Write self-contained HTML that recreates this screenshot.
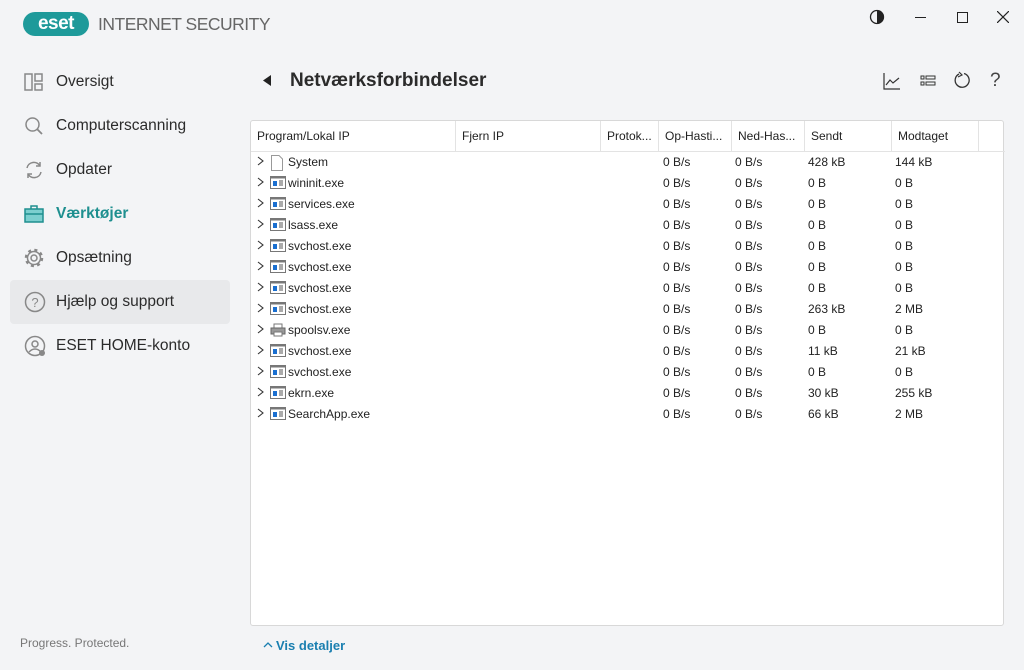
<!DOCTYPE html>
<html><head><meta charset="utf-8"><style>
*{margin:0;padding:0;box-sizing:border-box}
body{width:1024px;height:670px;background:#f3f4f6;font-family:"Liberation Sans",sans-serif;color:#222;position:relative;overflow:hidden;font-size:13px}
.abs{position:absolute}
.nav{position:absolute;left:10px;width:220px;height:44px;display:flex;align-items:center;font-size:15.5px;color:#2b2b2b}
.nav svg{position:absolute;left:14px}
.nav span{position:absolute;left:46px}
.panel{position:absolute;left:250px;top:120px;width:754px;height:506px;background:#fff;border:1px solid #d8d8d8;border-radius:3px}
.hdr{position:absolute;top:0;height:31px;border-right:1px solid #e3e3e3;border-bottom:1px solid #e3e3e3;font-size:12px;line-height:31px;padding-left:6px;white-space:nowrap;overflow:hidden}
.row{position:absolute;left:0;height:21px;font-size:12px;line-height:21px;width:750px}
.row div{position:absolute;white-space:nowrap}
</style></head><body>
<div class="abs" style="left:23px;top:12px;width:66px;height:24px;background:#1e9a9a;border-radius:12px;color:#fff;font-weight:bold;font-size:19px;line-height:24px;text-align:center;letter-spacing:-0.5px">eset</div>
<div class="abs" style="left:98px;top:14px;font-size:17.5px;color:#666;letter-spacing:-0.5px">INTERNET SECURITY</div>

<svg class="abs" style="left:869px;top:9px" width="16" height="16"><circle cx="8" cy="8" r="6.5" fill="none" stroke="#222" stroke-width="1.3"/><path d="M8 1.5A6.5 6.5 0 0 1 8 14.5Z" fill="#222"/></svg>
<div class="abs" style="left:915px;top:17px;width:11px;height:1px;background:#222"></div>
<div class="abs" style="left:957px;top:12px;width:11px;height:11px;border:1px solid #222"></div>
<svg class="abs" style="left:997px;top:11px" width="12" height="12"><path d="M0 0L12 12M12 0L0 12" stroke="#222" stroke-width="1.2"/></svg>

<div class="nav" style="top:60px"><svg width="20" height="20"><rect x="1" y="2" width="7" height="16" fill="none" stroke="#888" stroke-width="1.5"/><rect x="11" y="2" width="7" height="7" fill="none" stroke="#888" stroke-width="1.5"/><rect x="11" y="12" width="7" height="6" fill="none" stroke="#888" stroke-width="1.5"/></svg><span>Oversigt</span></div>
<div class="nav" style="top:104px"><svg width="20" height="20"><circle cx="8.5" cy="8.5" r="6.5" fill="none" stroke="#888" stroke-width="1.5"/><path d="M13 13L18 18" stroke="#888" stroke-width="1.8"/></svg><span>Computerscanning</span></div>
<div class="nav" style="top:148px"><svg width="20" height="20"><path d="M3 8A7 7 0 0 1 16 6M17 12A7 7 0 0 1 4 14" fill="none" stroke="#888" stroke-width="1.5"/><path d="M16 2V6H12M4 18V14H8" fill="none" stroke="#888" stroke-width="1.5"/></svg><span>Opdater</span></div>
<div class="nav" style="top:192px;color:#1e8f8f;font-weight:bold"><svg width="20" height="20"><rect x="1" y="5" width="18" height="13" fill="#7ccfcf" stroke="#1e8f8f" stroke-width="1.5"/><path d="M7 5V2H13V5M1 10H19" fill="none" stroke="#1e8f8f" stroke-width="1.5"/></svg><span>Værktøjer</span></div>
<div class="nav" style="top:236px"><svg width="20" height="20"><circle cx="10" cy="10" r="3" fill="none" stroke="#888" stroke-width="1.5"/><circle cx="10" cy="10" r="6.5" fill="none" stroke="#888" stroke-width="1.5"/><circle cx="10" cy="10" r="8" fill="none" stroke="#888" stroke-width="2.5" stroke-dasharray="3 3.3"/></svg><span>Opsætning</span></div>
<div class="nav" style="top:280px;background:#e8e9eb;border-radius:4px"><svg width="22" height="22"><circle cx="11" cy="11" r="9.5" fill="none" stroke="#888" stroke-width="1.5"/><text x="11" y="16" font-size="13" text-anchor="middle" fill="#888" font-family="Liberation Sans">?</text></svg><span>Hjælp og support</span></div>
<div class="nav" style="top:324px"><svg width="22" height="22"><circle cx="11" cy="11" r="9.5" fill="none" stroke="#888" stroke-width="1.5"/><circle cx="11" cy="9" r="3" fill="none" stroke="#888" stroke-width="1.5"/><path d="M5 17Q11 11 17 17" fill="none" stroke="#888" stroke-width="1.5"/><circle cx="18" cy="18" r="3" fill="#888"/></svg><span>ESET HOME-konto</span></div>

<div class="abs" style="left:20px;top:636px;font-size:12px;color:#777">Progress. Protected.</div>

<svg class="abs" style="left:263px;top:75px" width="8" height="11"><path d="M8 0V11L0 5.5Z" fill="#222"/></svg>
<div class="abs" style="left:290px;top:70px;font-size:19px;font-weight:bold;color:#2b2b2b">Netværksforbindelser</div>

<svg class="abs" style="left:883px;top:72px" width="18" height="18"><path d="M1 1V17H17" fill="none" stroke="#333" stroke-width="1.2"/><path d="M3 13L7 8L10 11L16 6" fill="none" stroke="#333" stroke-width="1.2"/></svg>
<svg class="abs" style="left:920px;top:74px" width="16" height="14"><rect x="1" y="2" width="3" height="3" fill="none" stroke="#333"/><rect x="6" y="2" width="9" height="3" fill="none" stroke="#333"/><rect x="1" y="8" width="3" height="3" fill="none" stroke="#333"/><rect x="6" y="8" width="9" height="3" fill="none" stroke="#333"/></svg>
<svg class="abs" style="left:953px;top:71px" width="18" height="18"><path d="M6 3A7 7 0 1 0 11 2.5" fill="none" stroke="#333" stroke-width="1.3"/><path d="M6 1L9 4L5 6" fill="none" stroke="#333" stroke-width="1.2"/></svg>
<div class="abs" style="left:990px;top:70px;font-size:19px;color:#444">?</div>

<div class="panel">
<div class="hdr" style="left:0;width:205px">Program/Lokal IP</div>
<div class="hdr" style="left:205px;width:145px">Fjern IP</div>
<div class="hdr" style="left:350px;width:58px">Protok...</div>
<div class="hdr" style="left:408px;width:73px">Op-Hasti...</div>
<div class="hdr" style="left:481px;width:73px">Ned-Has...</div>
<div class="hdr" style="left:554px;width:87px">Sendt</div>
<div class="hdr" style="left:641px;width:87px">Modtaget</div>
<div class="hdr" style="left:728px;width:26px;border-right:none"></div>
<div id="rows"></div>
</div>
<script>
var d=[["System","0 B/s","0 B/s","428 kB","144 kB",0],["wininit.exe","0 B/s","0 B/s","0 B","0 B",1],["services.exe","0 B/s","0 B/s","0 B","0 B",1],["lsass.exe","0 B/s","0 B/s","0 B","0 B",1],["svchost.exe","0 B/s","0 B/s","0 B","0 B",1],["svchost.exe","0 B/s","0 B/s","0 B","0 B",1],["svchost.exe","0 B/s","0 B/s","0 B","0 B",1],["svchost.exe","0 B/s","0 B/s","263 kB","2 MB",1],["spoolsv.exe","0 B/s","0 B/s","0 B","0 B",2],["svchost.exe","0 B/s","0 B/s","11 kB","21 kB",1],["svchost.exe","0 B/s","0 B/s","0 B","0 B",1],["ekrn.exe","0 B/s","0 B/s","30 kB","255 kB",1],["SearchApp.exe","0 B/s","0 B/s","66 kB","2 MB",1]];
var h="";
var ic=['<svg width="14" height="16"><path d="M1.5 .5H9L12.5 4V15.5H1.5Z" fill="#fff" stroke="#999"/></svg>','<svg width="16" height="13"><rect x=".5" y=".5" width="15" height="12" fill="#fff" stroke="#777"/><rect x=".5" y=".5" width="15" height="2" fill="#777"/><rect x="3" y="5" width="4" height="5" fill="#1a6fd0"/><path d="M9 5H13M9 7H13M9 9H13" stroke="#555"/></svg>','<svg width="16" height="14"><rect x="4" y="1" width="8" height="4" fill="#fff" stroke="#777"/><rect x="1" y="5" width="14" height="6" fill="#999" stroke="#666"/><rect x="4" y="9" width="8" height="4" fill="#fff" stroke="#777"/></svg>'];
d.forEach(function(r,i){h+='<div class="row" style="top:'+(31+i*21)+'px"><div style="left:6px;top:0"><svg width="8" height="10"><path d="M1 1L6 5L1 9" fill="none" stroke="#333" stroke-width="1.1"/></svg></div><div style="left:19px;top:3px;line-height:0">'+ic[r[5]]+'</div><div style="left:37px">'+r[0]+'</div><div style="left:412px">'+r[1]+'</div><div style="left:484px">'+r[2]+'</div><div style="left:557px">'+r[3]+'</div><div style="left:644px">'+r[4]+'</div></div>'});
document.getElementById("rows").innerHTML=h;
</script>

<svg class="abs" style="left:263px;top:641px" width="10" height="7"><path d="M1 6L5 2L9 6" fill="none" stroke="#1a7fb0" stroke-width="1.3"/></svg>
<div class="abs" style="left:276px;top:638px;font-size:13px;color:#1a7fb0;font-weight:bold">Vis detaljer</div>
</body></html>
